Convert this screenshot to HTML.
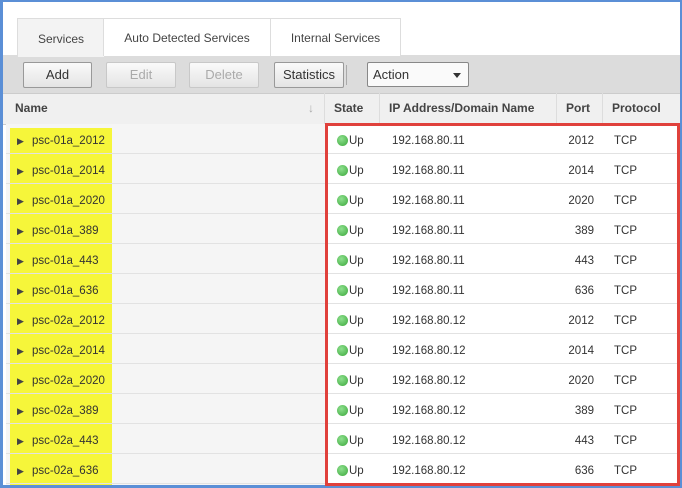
<!DOCTYPE html>
<html><head><style>
*{margin:0;padding:0;box-sizing:border-box}
body{width:682px;height:488px;background:#5b8fd6;font-family:"Liberation Sans",sans-serif;font-size:12px;color:#333;position:relative;overflow:hidden}
.in{position:absolute;left:3px;top:2px;width:677px;height:483px;background:#fff}
.abs{position:absolute}
.tab{position:absolute;top:16px;height:38px;border:1px solid #ddd;border-bottom:none;background:#fff;text-align:center;line-height:38px;color:#444;font-size:12px}
.btn{position:absolute;top:60px;height:26px;border:1px solid #999;border-radius:2px;background:linear-gradient(#fafafa,#e4e4e4);text-align:center;line-height:24px;font-size:13px;color:#333}
.dis{border-color:#c8c8c8;color:#aaa}
.hd{position:absolute;top:91px;height:31px;line-height:31px;font-weight:bold;font-size:12px;color:#444;border-right:1px solid #ddd;padding-left:9px}
.row{position:absolute;left:3px;width:674px;height:30px;border-bottom:1px solid #e2e2e2;font-size:11.5px}
.row span{position:absolute;top:2px;line-height:30px}
.dot{display:inline-block;width:11px;height:11px;border-radius:50%;background:radial-gradient(circle at 40% 35%,#8fe08f,#3aa83a);vertical-align:-2px;margin-right:1px}
</style></head><body>
<div class="in">
<div class="abs" style="left:0;top:53px;width:677px;height:38px;background:#dcdcdc"></div>
<div class="tab" style="left:14px;width:88px;background:#f3f3f3;height:39px;line-height:40px">Services</div>
<div class="tab" style="left:100px;width:168px">Auto Detected Services</div>
<div class="tab" style="left:267px;width:131px">Internal Services</div>
<div class="btn" style="left:20px;width:69px">Add</div>
<div class="btn dis" style="left:103px;width:70px">Edit</div>
<div class="btn dis" style="left:186px;width:70px">Delete</div>
<div class="btn" style="left:271px;width:70px">Statistics</div>
<div class="abs" style="left:343px;top:63px;width:1px;height:20px;background:#aaa"></div>
<div class="btn" style="left:364px;width:102px;height:25px;top:60px;text-align:left;padding-left:5px;background:#fafafa;border-color:#888">Action<span style="position:absolute;right:7px;top:10px;border:4px solid transparent;border-top:5px solid #333"></span></div>
<div class="abs" style="left:0;top:91px;width:677px;height:32px;background:#f0f0f0;border-top:1px solid #ccc;border-bottom:1px solid #ccc"></div>
<div class="hd" style="left:3px;width:319px">Name<span style="position:absolute;right:10px;color:#aaa;font-weight:normal">&#8595;</span></div>
<div class="hd" style="left:322px;width:55px">State</div>
<div class="hd" style="left:377px;width:177px">IP Address/Domain Name</div>
<div class="hd" style="left:554px;width:46px">Port</div>
<div class="hd" style="left:600px;width:74px;border-right:none">Protocol</div>
<div class="abs" style="left:3px;top:122px;width:319px;height:361px;background:#f5f5f5"></div>
<div class="abs" style="left:7px;top:126px;width:102px;height:357px;background:#f6f63a"></div>
<div id="rows"></div>
<div class="abs" style="left:322px;top:121px;width:355px;height:363px;border:3px solid #e0413c"></div>
</div>
<script>
var d=[["psc-01a_2012",".11",2012],["psc-01a_2014",".11",2014],["psc-01a_2020",".11",2020],["psc-01a_389",".11",389],["psc-01a_443",".11",443],["psc-01a_636",".11",636],["psc-02a_2012",".12",2012],["psc-02a_2014",".12",2014],["psc-02a_2020",".12",2020],["psc-02a_389",".12",389],["psc-02a_443",".12",443],["psc-02a_636",".12",636]];
var h="";d.forEach(function(r,i){h+='<div class="row" style="top:'+(122+i*30)+'px"><span style="left:11px;font-size:9px;color:#444">&#9654;</span><span style="left:26px">'+r[0]+'</span><span style="left:331px"><i class="dot"></i>Up</span><span style="left:386px">192.168.80'+r[1]+'</span><span style="left:540px;width:48px;text-align:right">'+r[2]+'</span><span style="left:608px">TCP</span></div>'});
document.getElementById("rows").innerHTML=h;
</script>
</body></html>
